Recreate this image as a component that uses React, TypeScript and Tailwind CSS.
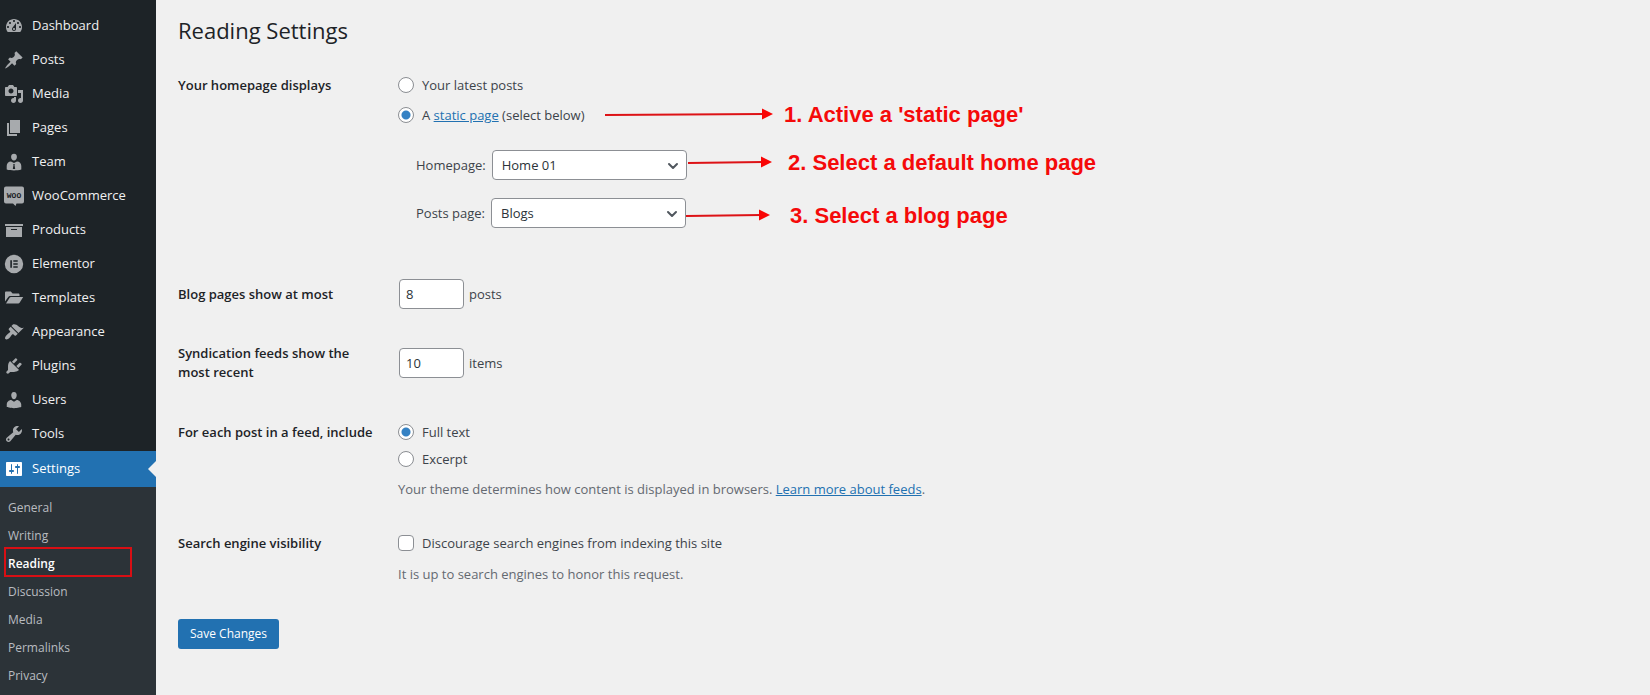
import { ChevronDown } from 'lucide-react';
import React, { useState } from 'react';

type MenuItem = {
  label: string;
  icon: React.ReactNode;
};

const menuItems: MenuItem[] = [
  {
    label: 'Dashboard',
    icon: <path d="M3.76 16h12.48c1.1-1.37 1.76-3.11 1.76-5 0-4.42-3.58-8-8-8s-8 3.58-8 8c0 1.89.66 3.63 1.76 5zM10 4c.55 0 1 .45 1 1s-.45 1-1 1-1-.45-1-1 .45-1 1-1zM6 6c.55 0 1 .45 1 1s-.45 1-1 1-1-.45-1-1 .45-1 1-1zm8 0c.55 0 1 .45 1 1s-.45 1-1 1-1-.45-1-1 .45-1 1-1zm-5.37 5.55L12 7v6c0 1.1-.9 2-2 2s-2-.9-2-2c0-.57.24-1.08.63-1.45zM4 10c.55 0 1 .45 1 1s-.45 1-1 1-1-.45-1-1 .45-1 1-1zm12 0c.55 0 1 .45 1 1s-.45 1-1 1-1-.45-1-1 .45-1 1-1zm-5 3c0-.55-.45-1-1-1s-1 .45-1 1 .45 1 1 1 1-.45 1-1z" />,
  },
  {
    label: 'Posts',
    icon: <path d="M10.44 3.02l1.82-1.82 6.36 6.35-1.83 1.82c-1.05-.68-2.48-.57-3.41.36l-.75.75c-.92.93-1.04 2.35-.35 3.41l-1.83 1.82-2.41-2.41-2.8 2.79c-.42.42-3.38 2.71-3.8 2.29s1.86-3.39 2.28-3.81l2.79-2.79L4.1 9.36l1.83-1.82c1.05.69 2.48.57 3.4-.36l.75-.75c.93-.92 1.05-2.35.36-3.41z" />,
  },
  {
    label: 'Media',
    icon: <path d="M13 11V4c0-.55-.45-1-1-1h-1.67L9 1H5L3.67 3H2c-.55 0-1 .45-1 1v7c0 .55.45 1 1 1h10c.55 0 1-.45 1-1zM7 4.5c1.38 0 2.5 1.12 2.5 2.5S8.38 9.5 7 9.5 4.5 8.38 4.5 7 5.62 4.5 7 4.5zM14 6h5v10.5c0 1.38-1.12 2.5-2.5 2.5S14 17.88 14 16.5s1.12-2.5 2.5-2.5c.17 0 .34.02.5.05V9h-3V6zm-4 8.05V13h2v3.5c0 1.38-1.12 2.5-2.5 2.5S7 17.88 7 16.5 8.12 14 9.5 14c.17 0 .34.02.5.05z" />,
  },
  {
    label: 'Pages',
    icon: <path d="M6 15V2h10v13H6zm-1 1h8v2H3V5h2v11z" />,
  },
  {
    label: 'Team',
    icon: (
      <path
        fillRule="evenodd"
        d="M10 8.6c-1.9 0-2.9-1.9-2.9-3.8C7.1 3 8.2 1.8 10 1.8s2.9 1.2 2.9 3c0 1.9-1 3.8-2.9 3.8zM7 9.6c-2.5 0-4.3 1.9-4.3 4.4v3.500c2.100.6 4.700.9 7.300.9s5.200-.3 7.300-.9V14c0-2.500-1.800-4.400-4.300-4.400l-3 1.400zM9.200 12h1.600l-.3 1 .7 4H8.800l.7-4z"
      />
    ),
  },
  {
    label: 'WooCommerce',
    icon: (
      <>
        <path d="M2 .5h16a2 2 0 0 1 2 2v13a2 2 0 0 1-2 2h-5.500l-1 2.500L9 17.500H2a2 2 0 0 1-2-2v-13a2 2 0 0 1 2-2z" />
        <text x="10" y="12" textAnchor="middle" className="fill-[#1d2327] font-['Liberation_Mono',monospace] text-[8px] font-bold">
          WOO
        </text>
      </>
    ),
  },
  {
    label: 'Products',
    icon: <path d="M19 4v2H1V4h18zM2 7h16v10H2V7zm11 3V9H7v1h6z" />,
  },
  {
    label: 'Elementor',
    icon: <path fillRule="evenodd" d="M10 .8a9.200 9.200 0 1 0 0 18.400A9.200 9.200 0 0 0 10 .8zM6.300 6.300h1.600v7.400H6.300zM9.300 6.300h4.400v1.500H9.300zM9.300 9.250h4.400v1.500H9.300zM9.300 12.200h4.400v1.500H9.300z" />,
  },
  {
    label: 'Templates',
    icon: <path d="M1 13.600V4.700c0-.7.500-1.200 1.200-1.200h4.600l1.800 2h5.700c.7 0 1.200.5 1.200 1.200v1.200H6.600c-1.100 0-2 .5-2.500 1.400zM2 15.500l3.600-5.700c.3-.5.800-.8 1.400-.8h12.200l-3.600 5.700c-.3.500-.8.800-1.400.8z" />,
  },
  {
    label: 'Appearance',
    icon: <path d="M14.480 11.060L7.410 3.990l1.500-1.500c.5-.56 2.300-.47 3.510.32 1.210.8 1.430 1.280 2.910 2.100 1.180.64 2.450 1.260 4.450.85zm-.71.71L6.700 4.700 4.930 6.470c-.39.39-.39 1.020 0 1.410l1.060 1.060c.39.39.39 1.030 0 1.420-.6.6-1.430 1.110-2.210 1.690-.35.26-.7.53-1.010.84C1.430 14.230.4 16.080 1.400 17.070c.99 1 2.840-.03 4.180-1.360.31-.31.58-.66.85-1.020.57-.78 1.080-1.610 1.690-2.210.39-.39 1.020-.39 1.410 0l1.060 1.060c.39.39 1.020.39 1.410 0z" />,
  },
  {
    label: 'Plugins',
    icon: <path d="M13.110 4.360L9.870 7.600 8 5.730l3.240-3.240c.35-.34 1.050-.2 1.560.32.52.51.66 1.210.31 1.550zm-8 1.770l.91-1.120 9.010 9.010-1.190.84c-.71.71-2.630 1.160-3.820 1.160H6.140L4.900 17.260c-.59.59-1.540.59-2.120 0-.59-.58-.59-1.530 0-2.120l1.240-1.240v-3.880c0-1.130.4-3.190 1.090-3.890zm7.260 3.970l3.240-3.240c.34-.35 1.040-.21 1.550.31.52.51.66 1.210.31 1.550l-3.240 3.250z" />,
  },
  {
    label: 'Users',
    icon: <path d="M10 9.250c-2.270 0-2.730-3.440-2.730-3.440C7 4.020 7.820 2 9.970 2c2.160 0 2.980 2.020 2.710 3.810 0 0-.41 3.440-2.680 3.440zm0 2.570L12.720 10c2.390 0 4.520 2.330 4.520 4.530v2.490s-3.650 1.130-7.240 1.130c-3.650 0-7.240-1.130-7.240-1.130v-2.490c0-2.250 1.940-4.480 4.470-4.480z" />,
  },
  {
    label: 'Tools',
    icon: <path d="M16.680 9.770c-1.340 1.340-3.300 1.670-4.950.99l-5.410 6.520c-.99.99-2.590.99-3.580 0s-.99-2.590 0-3.570l6.520-5.420c-.68-1.650-.35-3.610.99-4.950 1.280-1.280 3.120-1.620 4.720-1.060l-2.890 2.890 2.820 2.820 2.860-2.870c.53 1.580.18 3.390-1.080 4.650zM3.810 16.210c.4.39 1.040.39 1.430 0 .4-.4.4-1.040 0-1.430-.39-.4-1.030-.4-1.430 0-.39.39-.39 1.030 0 1.430z" />,
  },
];

const settingsIcon = (
  <path d="M18 16V4c0-.55-.45-1-1-1H3c-.55 0-1 .45-1 1v12c0 .55.45 1 1 1h14c.55 0 1-.45 1-1zM8 11h1c.55 0 1 .45 1 1s-.45 1-1 1H8v1.500c0 .28-.22.5-.5.5s-.5-.22-.5-.5V13H6c-.55 0-1-.45-1-1s.45-1 1-1h1V5.500c0-.28.22-.5.5-.5s.5.22.5.5V11zm5-2h-1c-.55 0-1-.45-1-1s.45-1 1-1h1V5.500c0-.28.22-.5.5-.5s.5.22.5.5V7h1c.55 0 1 .45 1 1s-.45 1-1 1h-1v5.500c0 .28-.22.5-.5.5s-.5-.22-.5-.5V9z" />
);

const subItems = ['General', 'Writing', 'Reading', 'Discussion', 'Media', 'Permalinks', 'Privacy'];

const MenuIcon: React.FC<{ children: React.ReactNode }> = ({ children }) => (
  <svg viewBox="0 0 20 20" className="mr-2 size-5 shrink-0 overflow-visible fill-current" aria-hidden="true">
    {children}
  </svg>
);

const Sidebar: React.FC = () => (
  <nav className="flex w-[156px] shrink-0 flex-col bg-[#1d2327] pt-[9px] text-[13px]">
    <ul>
      {menuItems.map(item => (
        <li key={item.label}>
          <a href="#" className="flex h-[34px] items-center pl-1 text-[#a7aaad]">
            <MenuIcon>{item.icon}</MenuIcon>
            <span className="text-[#f0f0f1]">{item.label}</span>
          </a>
        </li>
      ))}
    </ul>
    <a href="#" className="relative flex h-9 items-center bg-[#2271b1] pl-1 text-white">
      <MenuIcon>{settingsIcon}</MenuIcon>
      Settings
      {/* current page notch */}
      <svg viewBox="0 0 8 16" className="absolute top-[10px] right-0 h-4 w-2 fill-[#f0f0f0]" aria-hidden="true">
        <path d="M8 0v16L0 8z" />
      </svg>
    </a>
    <ul className="grow bg-[#2c3338] pt-[7px] text-xs">
      {subItems.map(item => (
        <li key={item} className="relative">
          <a
            href="#"
            className={`flex h-7 items-center pl-2 ${item === 'Reading' ? 'font-semibold text-white' : 'text-[#b9bcc0]'}`}
          >
            {item}
          </a>
          {item === 'Reading' && (
            <span className="pointer-events-none absolute -top-[3px] left-1 h-[30px] w-32 border-2 border-[#d90f14]" />
          )}
        </li>
      ))}
    </ul>
  </nav>
);

type RadioProps = {
  name: string;
  checked: boolean;
  onChange: () => void;
  children: React.ReactNode;
};

const Radio: React.FC<RadioProps> = ({ name, checked, onChange, children }) => (
  <label className="flex h-5 items-center gap-2">
    <input
      type="radio"
      name={name}
      checked={checked}
      onChange={onChange}
      className="size-4 shrink-0 appearance-none rounded-full border border-[#8c8f94] bg-white bg-clip-padding checked:bg-[radial-gradient(circle,#3582c4_0_4px,#fff_5px)]"
    />
    <span>{children}</span>
  </label>
);

type PageSelectProps = {
  id: string;
  label: string;
  options: string[];
};

const PageSelect: React.FC<PageSelectProps> = ({ id, label, options }) => (
  <div className="flex items-center gap-[6px] pl-[18px]">
    <label htmlFor={id}>{label}</label>
    <div className="relative">
      <select
        id={id}
        className="h-[30px] w-[195px] appearance-none rounded border border-[#8c8f94] bg-white pr-6 pl-[9px] text-[#2c3338]"
      >
        {options.map(option => (
          <option key={option}>{option}</option>
        ))}
      </select>
      <ChevronDown size={16} strokeWidth={3} className="pointer-events-none absolute top-2 right-[6px] text-[#50575e]" />
    </div>
  </div>
);

type CalloutProps = {
  text: string;
  length: number;
  className: string;
};

// Red arrow with a note, drawn over the form
const Callout: React.FC<CalloutProps> = ({ text, length, className }) => (
  <div className={`pointer-events-none absolute flex h-6 items-center whitespace-nowrap ${className}`}>
    <svg width={length} height="14" className="shrink-0" aria-hidden="true">
      <line x1="0" y1="7" x2={length - 9} y2="6" stroke="#dd1216" strokeWidth="2" />
      <path d={`M${length} 6l-11-5.500v11z`} fill="#f90505" />
    </svg>
    <span className="font-['Liberation_Sans',Arial,sans-serif] text-[22px] leading-6 font-bold text-[#f50a0a]">{text}</span>
  </div>
);

type FormRowProps = {
  label: React.ReactNode;
  className: string;
  children: React.ReactNode;
};

const FormRow: React.FC<FormRowProps> = ({ label, className, children }) => (
  <div className={`flex ${className}`}>
    <div className="w-[220px] shrink-0 pr-5 font-semibold text-[#1d2327]">{label}</div>
    <div className="relative grow">{children}</div>
  </div>
);

const numberInput = 'ml-px h-[30px] w-[65px] rounded border border-[#8c8f94] bg-white px-[6px] text-[#2c3338]';

const App: React.FC = () => {
  const [homepage, setHomepage] = useState('page');
  const [feed, setFeed] = useState('full');

  return (
    <div className="flex min-h-screen bg-[#f0f0f0] font-['Open_Sans','Noto_Sans',sans-serif]">
      <Sidebar />

      <main className="grow pt-4 pl-[22px] text-[13px] leading-5 text-[#3c434a]">
        <h1 className="text-[22px] leading-7 text-[#1d2327]">Reading Settings</h1>

        <form onSubmit={e => e.preventDefault()}>
          <FormRow label="Your homepage displays" className="mt-[31px]">
            <Radio name="homepage" checked={homepage === 'posts'} onChange={() => setHomepage('posts')}>
              Your latest posts
            </Radio>
            <div className="mt-[10px]">
              <Radio name="homepage" checked={homepage === 'page'} onChange={() => setHomepage('page')}>
                A <a href="#" className="text-[#2271b1] underline">static page</a> (select below)
              </Radio>
            </div>
            <div className="mt-[25px] flex flex-col gap-[18px]">
              <PageSelect id="page_on_front" label="Homepage:" options={['Home 01']} />
              <PageSelect id="page_for_posts" label="Posts page:" options={['Blogs']} />
            </div>
            <Callout text="1. Active a 'static page'" length={168} className="top-[28px] left-[207px] gap-[11px]" />
            <Callout text="2. Select a default home page" length={84} className="top-[76px] left-[290px] gap-4" />
            <Callout text="3. Select a blog page" length={84} className="top-[129px] left-[288px] gap-5" />
          </FormRow>

          <FormRow label={<label htmlFor="posts_per_page">Blog pages show at most</label>} className="mt-[51px] items-center">
            <div className="flex items-center gap-[5px]">
              <input id="posts_per_page" type="text" inputMode="numeric" defaultValue="8" className={numberInput} />
              posts
            </div>
          </FormRow>

          <FormRow
            label={<label htmlFor="posts_per_rss">Syndication feeds show the most recent</label>}
            className="mt-[35px] items-center leading-[19px]"
          >
            <div className="flex items-center gap-[5px]">
              <input id="posts_per_rss" type="text" inputMode="numeric" defaultValue="10" className={numberInput} />
              items
            </div>
          </FormRow>

          <FormRow label="For each post in a feed, include" className="mt-10">
            <div className="flex flex-col gap-[7px]">
              <Radio name="feed" checked={feed === 'full'} onChange={() => setFeed('full')}>
                Full text
              </Radio>
              <Radio name="feed" checked={feed === 'excerpt'} onChange={() => setFeed('excerpt')}>
                Excerpt
              </Radio>
            </div>
            <p className="mt-[10px] text-[#646970]">
              Your theme determines how content is displayed in browsers.{' '}
              <a href="#" className="text-[#2271b1] underline">Learn more about feeds</a>.
            </p>
          </FormRow>

          <FormRow label="Search engine visibility" className="mt-[34px]">
            <label className="flex h-5 items-center gap-2">
              <input
                type="checkbox"
                className="size-4 shrink-0 appearance-none rounded border border-[#8c8f94] bg-white checked:bg-[#3582c4]"
              />
              <span>Discourage search engines from indexing this site</span>
            </label>
            <p className="mt-[11px] text-[#646970]">It is up to search engines to honor this request.</p>
          </FormRow>

          <button type="submit" className="mt-[35px] h-[30px] rounded-[3px] bg-[#2271b1] px-3 text-xs text-white">
            Save Changes
          </button>
        </form>
      </main>
    </div>
  );
};

export default App;
